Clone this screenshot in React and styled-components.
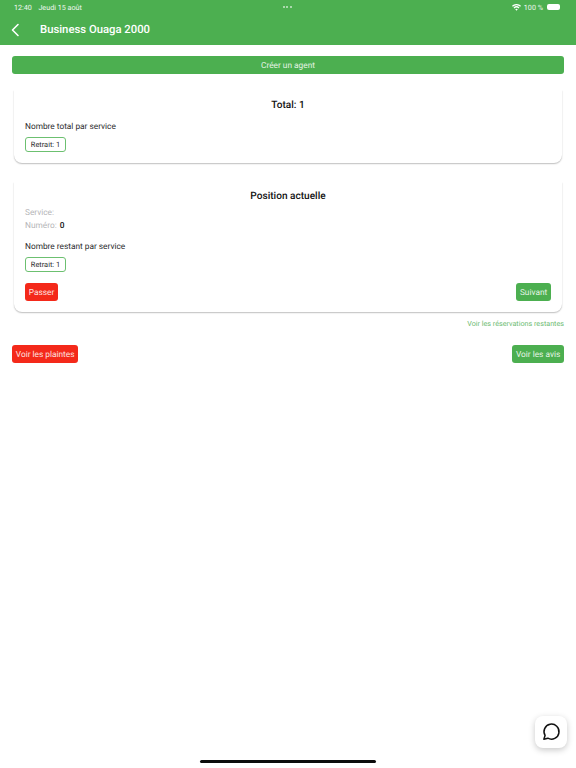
import React from 'react';
import styled, { createGlobalStyle } from 'styled-components';

const GREEN = '#4caf50';
const RED = '#f4291a';

const Global = createGlobalStyle`
  html, body { margin: 0; padding: 0; background: #fff; }
  body {
    font-family: Roboto, "Liberation Sans", sans-serif;
    color: #1c1c1e;
    text-rendering: geometricPrecision;
  }
`;

const Page = styled.div`
  position: relative;
  width: 576px;
  height: 768px;
  overflow: hidden;
  background: #fff;
`;

const Header = styled.header`
  height: 45px;
  background: ${GREEN};
  color: #fff;
`;

const StatusBar = styled.div`
  height: 14px;
  padding: 0 16px 0 14px;
  display: grid;
  grid-template-columns: 1fr auto 1fr;
  align-items: center;
  font-size: 7.2px;
  color: #f1f8f1;
`;

const StatusLeft = styled.div`
  display: flex;
  gap: 6.5px;
`;

const Dots = styled.div`
  display: flex;
  gap: 1.5px;
`;

const Dot = styled.span`
  width: 2px;
  height: 2px;
  border-radius: 50%;
  background: #fff;
  opacity: 0.7;
`;

const StatusRight = styled.div`
  display: flex;
  justify-content: flex-end;
  align-items: center;
  gap: 3px;
`;

const Battery = styled.span`
  width: 13px;
  height: 6px;
  margin-left: 1px;
  border-radius: 2px;
  background: #fff;
`;

const NavBar = styled.div`
  height: 31px;
  display: flex;
  align-items: center;
  padding-left: 9px;
`;

const Back = styled.svg`
  width: 12px;
  height: 14px;
  fill: none;
  stroke: #fff;
  stroke-width: 1.6;
  stroke-linecap: round;
  stroke-linejoin: round;
`;

const Title = styled.h1`
  margin: 0 0 0 19px;
  font-size: 11.3px;
  font-weight: 500;
  line-height: 14px;
`;

const Content = styled.main`
  padding: 11px 12px 0;
  display: flex;
  flex-direction: column;
`;

const Button = styled.button`
  height: 18px;
  padding: 2px 3.8px 0;
  border: 0;
  border-radius: 3px;
  background: ${p => (p.$danger ? RED : GREEN)};
  color: ${p => (p.$danger ? '#fde3e0' : '#e6f4e6')};
  font-family: inherit;
  text-rendering: geometricPrecision;
  font-size: 8.3px;
  line-height: 16px;
  white-space: nowrap;
`;

const WideButton = styled(Button)`
  width: 100%;
`;

const Card = styled.section`
  margin: ${p => (p.$first ? '16px' : '19px')} 2px 0;
  height: ${p => p.$height}px;
  padding: 0 11px;
  box-sizing: border-box;
  background: #fff;
  border-radius: 0 0 8px 8px;
  box-shadow: 0 1px 1.5px rgba(0, 0, 0, 0.25), 0 0 1px rgba(0, 0, 0, 0.06);
  display: flex;
  flex-direction: column;
  clip-path: inset(0 -4px -4px -4px);
`;

const CardTitle = styled.h2`
  margin: ${p => p.$top}px 0 0;
  text-align: center;
  font-size: 10.1px;
  font-weight: 500;
  line-height: 13px;
  color: #111;
`;

const Label = styled.div`
  margin-top: ${p => p.$top}px;
  font-size: 8.3px;
  line-height: 11px;
  color: #2b2b2d;
`;

const Muted = styled.div`
  margin-top: ${p => p.$top}px;
  font-size: 8.3px;
  line-height: 12px;
  color: #b5b5b8;
`;

const Value = styled.b`
  margin-left: 1px;
  color: #111;
  font-weight: 500;
`;

const Chip = styled.div`
  margin-top: 4px;
  width: 41px;
  height: 15px;
  box-sizing: border-box;
  border: 1px solid #6cc070;
  border-radius: 3px;
  background: #fff;
  font-size: 7.4px;
  line-height: 13px;
  text-align: center;
  color: #2b2b2d;
`;

const CardActions = styled.div`
  margin-top: 11px;
  display: flex;
  justify-content: space-between;
`;

const MoreLink = styled.a`
  margin-top: 7px;
  text-align: right;
  font-size: 7.2px;
  line-height: 10px;
  color: #6dbb71;
`;

const Footer = styled.div`
  margin-top: 16px;
  display: flex;
  justify-content: space-between;
`;

const ChatButton = styled.button`
  position: absolute;
  left: 535px;
  top: 716px;
  width: 32px;
  height: 32px;
  padding: 0;
  border: 0;
  border-radius: 8px;
  background: #fff;
  box-shadow: 0 2px 6px rgba(0, 0, 0, 0.22);
  display: flex;
  align-items: center;
  justify-content: center;
`;

const ChatIcon = styled.svg`
  width: 20px;
  height: 20px;
  fill: none;
  stroke: #111;
  stroke-width: 1.8;
  stroke-linejoin: round;
  stroke-linecap: round;
`;

const HomeIndicator = styled.div`
  position: absolute;
  left: 200px;
  top: 760px;
  width: 176px;
  height: 3px;
  border-radius: 2px;
  background: #0c0c0c;
`;

export default function App() {
  return (
    <Page>
      <Global />
      <Header>
        <StatusBar>
          <StatusLeft>
            <span>12:40</span>
            <span>Jeudi 15 août</span>
          </StatusLeft>
          <Dots>
            <Dot />
            <Dot />
            <Dot />
          </Dots>
          <StatusRight>
            <svg width="9" height="7" viewBox="0 0 18 14" fill="#fff">
              <path d="M9 13.5 6.4 10.6a3.7 3.7 0 0 1 5.2 0ZM4.8 8.9 3.1 7a8.6 8.6 0 0 1 11.8 0l-1.7 1.9a6 6 0 0 0-8.4 0ZM1.6 5.4 0 3.6a13 13 0 0 1 18 0l-1.6 1.8a10.6 10.6 0 0 0-14.8 0Z" />
            </svg>
            <span>100 %</span>
            <Battery />
          </StatusRight>
        </StatusBar>
        <NavBar>
          <Back viewBox="0 0 12 14">
            <path d="M9 1.5 3.5 7 9 12.5" />
          </Back>
          <Title>Business Ouaga 2000</Title>
        </NavBar>
      </Header>
      <Content>
        <WideButton>Créer un agent</WideButton>
        <Card $first $height={73}>
          <CardTitle $top={9}>Total: 1</CardTitle>
          <Label $top={10}>Nombre total par service</Label>
          <Chip>Retrait: 1</Chip>
        </Card>
        <Card $height={130}>
          <CardTitle $top={8}>Position actuelle</CardTitle>
          <Muted $top={4}>Service:</Muted>
          <Muted $top={1}>
            Numéro: <Value>0</Value>
          </Muted>
          <Label $top={10}>Nombre restant par service</Label>
          <Chip>Retrait: 1</Chip>
          <CardActions>
            <Button $danger>Passer</Button>
            <Button>Suivant</Button>
          </CardActions>
        </Card>
        <MoreLink>Voir les réservations restantes</MoreLink>
        <Footer>
          <Button $danger>Voir les plaintes</Button>
          <Button>Voir les avis</Button>
        </Footer>
      </Content>
      <ChatButton aria-label="Discussion">
        <ChatIcon viewBox="0 0 24 24">
          <path d="M3.4 20.6 4.9 16.2A9 9 0 1 1 8.2 19.4Z" />
        </ChatIcon>
      </ChatButton>
      <HomeIndicator />
    </Page>
  );
}
